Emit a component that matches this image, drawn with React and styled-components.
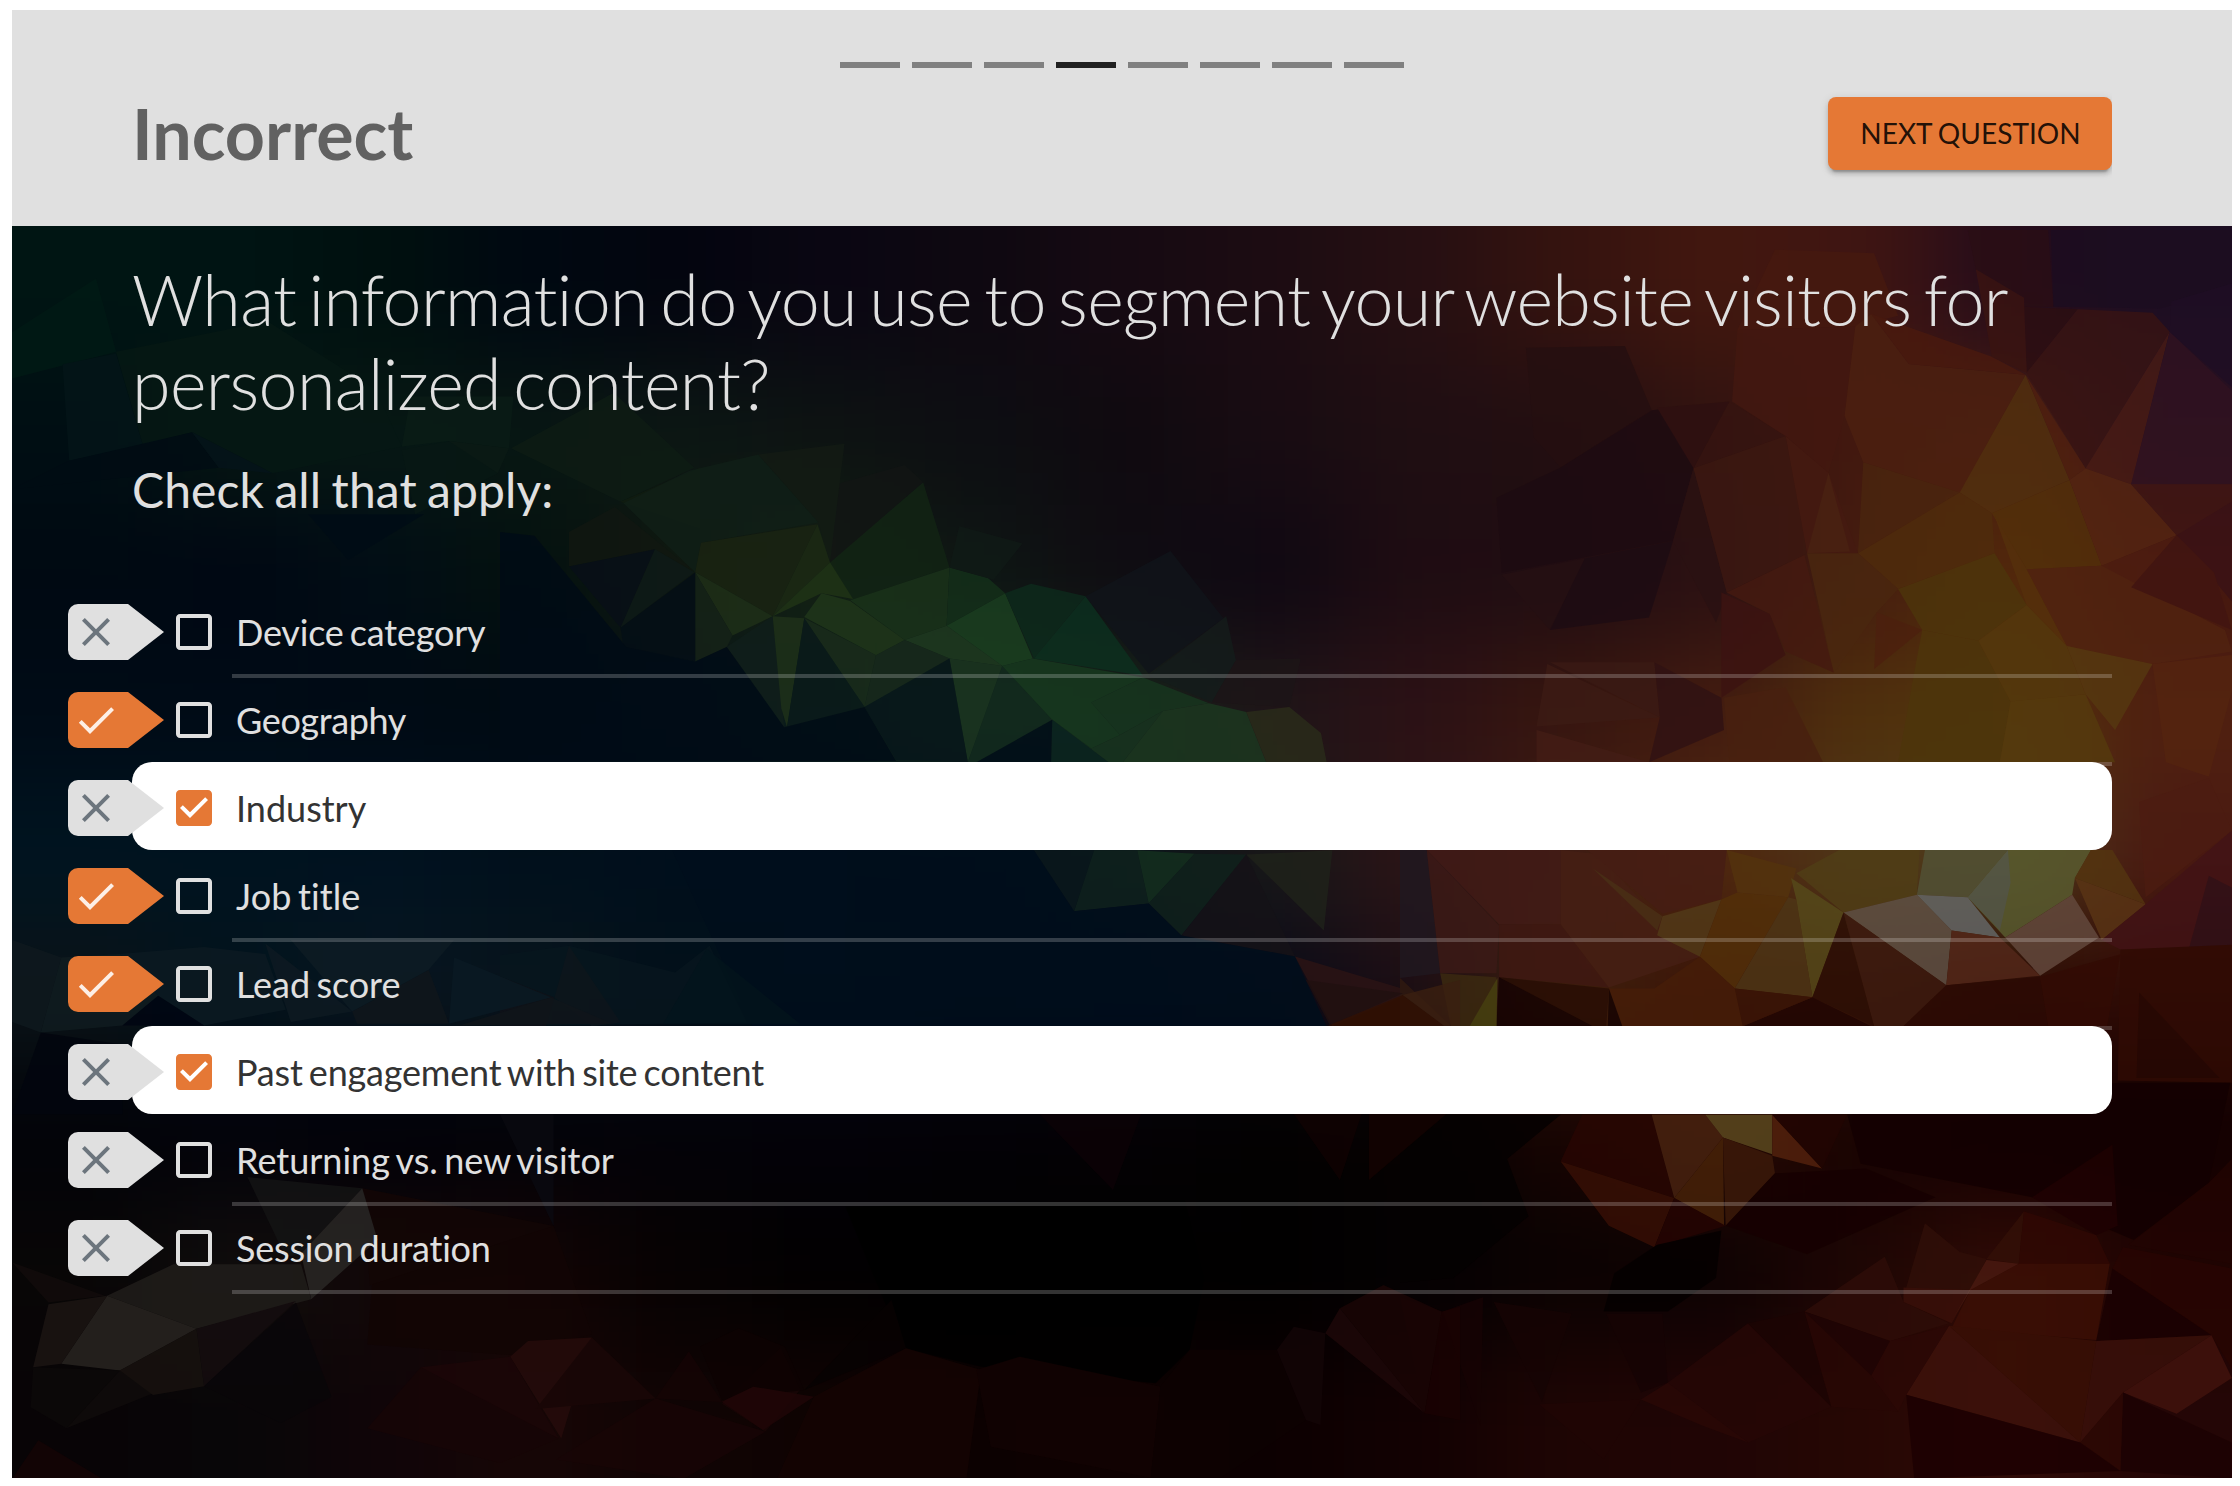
import React from "react";
import styled, { createGlobalStyle } from "styled-components";

const ORANGE = "#e57835";
const SILVER = "#e0e0e0";

const GlobalStyle = createGlobalStyle`
  html, body { margin: 0; padding: 0; background: #fff; overflow: hidden; }
  *, *::before, *::after { box-sizing: border-box; }
  body { font-family: Lato, "Liberation Sans", sans-serif; font-variant-ligatures: none; }
`;

const Page = styled.main`
  display: flex;
  flex-direction: column;
  height: 1486px;
  padding: 10px 8px 8px 12px;
`;

const Header = styled.header`
  flex: none;
  height: 216px;
  padding: 52px 120px 0;
  background: ${SILVER};
`;

const Progress = styled.ol`
  display: flex;
  justify-content: center;
  gap: 12px;
  margin: 0;
  padding: 0;
  list-style: none;
`;

const Step = styled.li`
  width: 60px;
  height: 6px;
  background: ${(p) => (p.$current ? "#212121" : "#808080")};
`;

const ResultBar = styled.div`
  display: flex;
  align-items: center;
  justify-content: space-between;
  height: 73px;
  margin-top: 29px;
`;

const ResultTitle = styled.h1`
  margin: 0 0 2px;
  color: #616161;
  font-size: 70px;
  font-weight: 700;
  line-height: 84px;
`;

const NextButton = styled.button`
  width: 284px;
  height: 73px;
  padding: 0 0 2px 1px;
  border: 0;
  border-radius: 8px;
  background: ${ORANGE};
  color: rgba(0, 0, 0, 0.87);
  font: 400 28px/34px Lato, "Liberation Sans", sans-serif;
  letter-spacing: 0.04px;
  word-spacing: -1.2px;
  text-transform: uppercase;
  white-space: nowrap;
  box-shadow: 0 6px 2px -4px rgba(0, 0, 0, 0.2), 0 4px 4px rgba(0, 0, 0, 0.14), 0 2px 10px rgba(0, 0, 0, 0.12);
  clip-path: inset(-20px 0 -20px -20px);
`;

const Stage = styled.section`
  display: grid;
  flex: 1;
  min-height: 0;
  background: #000;
`;

const Backdrop = styled.svg`
  grid-area: 1 / 1;
  display: block;
  width: 2220px;
  height: 1252px;
`;

const Content = styled.div`
  grid-area: 1 / 1;
  position: relative;
  padding: 31px 120px 0;
  color: ${SILVER};
`;

const Question = styled.h2`
  margin: 0;
  font-size: 70px;
  font-weight: 300;
  line-height: 84px;
  letter-spacing: -0.68px;
  word-spacing: -6px;
`;

const Hint = styled.p`
  height: 58px;
  margin: 36px 0 67px;
  font-size: 48px;
  line-height: 58px;
  letter-spacing: 0.1px;
  word-spacing: -2px;
`;

const Options = styled.ul`
  margin: 0;
  padding: 0;
  list-style: none;
`;

const Option = styled.li`
  position: relative;
  display: flex;
  align-items: center;
  gap: 18px;
  height: 88px;
  padding: 4px 0 0 38px;
  border-radius: ${(p) => (p.$selected ? "20px" : "0")};
  background: ${(p) => (p.$selected ? "#fff" : "transparent")};
  color: ${(p) => (p.$selected ? "#333" : SILVER)};

  &::after {
    content: "";
    display: ${(p) => (p.$selected ? "none" : "block")};
    position: absolute;
    top: 100%;
    left: 100px;
    right: 0;
    height: 4px;
    background: rgba(255, 255, 255, 0.2);
  }
`;

const OptionLabel = styled.span`
  font-size: 36px;
  line-height: 44px;
  letter-spacing: ${(p) => p.$tracking ?? -0.2}px;
  word-spacing: -2.8px;
`;

const Verdict = styled.span`
  position: absolute;
  top: 18px;
  left: -64px;
  display: flex;
  align-items: center;
  width: 60px;
  height: 56px;
  padding-left: 4px;
  border-radius: 10px 0 0 10px;
  background: ${(p) => (p.$right ? ORANGE : SILVER)};
  color: ${(p) => (p.$right ? "#fdefe6" : "#6c757d")};

  &::after {
    content: "";
    position: absolute;
    left: 100%;
    top: 0;
    border: 28px solid transparent;
    border-width: 28px 0 28px 36px;
    border-left-color: ${(p) => (p.$right ? ORANGE : SILVER)};
  }
`;

const Icon = styled.svg`
  flex: none;
  width: 48px;
  height: 48px;
  fill: ${(p) => p.$fill || "currentColor"};
`;

const PATHS = {
  check: "M9 16.17 4.83 12l-1.42 1.41L9 19 21 7l-1.41-1.41z",
  cross: "M19 6.41 17.59 5 12 10.59 6.41 5 5 6.41 10.59 12 5 17.59 6.41 19 12 13.41 17.59 19 19 17.59 13.41 12z",
  boxEmpty: "M19 5v14H5V5h14m0-2H5c-1.1 0-2 .9-2 2v14c0 1.1.9 2 2 2h14c1.1 0 2-.9 2-2V5c0-1.1-.9-2-2-2z",
  boxChecked:
    "M19 3H5c-1.11 0-2 .9-2 2v14c0 1.1.89 2 2 2h14c1.11 0 2-.9 2-2V5c0-1.1-.89-2-2-2zm-9 14l-5-5 1.41-1.41L10 14.17l7.59-7.59L19 8l-9 9z",
};

const Glyph = ({ name, fill }) => (
  <Icon viewBox="0 0 24 24" $fill={fill} aria-hidden="true">
    <path d={PATHS[name]} />
  </Icon>
);

// Colour field under the facets: one row of 15 swatches per 139px band.
const FIELD = [
  "001513 001413 00100f 000811 03050f 0a0612 0e0811 160a12 1c0c12 260f12 35130f 42170f 3f1512 250c1a 1c0d22",
  "000e13 051612 071814 081713 0c1714 0d1312 0d0e12 0f0a10 180c12 1f0e12 220e11 301310 43180f 4a1e10 2c1220",
  "000912 000713 010d15 04110f 10180f 132013 0e1613 0f0c12 0f0812 1e0c12 200d12 2a1012 451c0f 52290b 45170f",
  "000b16 000b16 000a14 000a12 07141a 0c1f1a 142a1c 15251a 201518 2c1115 38160f 431b10 4f300c 53360b 502010",
  "001420 001320 001220 00101c 000f1c 000d1c 000c18 0a141a 181818 2c1416 3e1b14 50280f 50381a 50401c 4a1a12",
  "0a1318 02131c 081620 08141c 02101a 000f1c 000c18 02091a 0b0a18 1c0e14 40200c 3a1408 3a1608 2c0a04 300b05",
  "020308 02020a 010108 020208 030208 030108 030106 040104 030101 060101 180402 2a0a03 180302 140002 120001",
  "080606 100d0c 120808 120404 060202 010001 000000 000000 000000 030102 0a0202 0c0203 1e0604 300b05 200402",
  "080406 080608 100508 170606 100404 0f0302 0c0101 0e0101 0c0001 120102 1e0504 200505 260704 300b07 240606",
].map((row) => row.split(" "));

// Facets are grouped in tiles; each tile has its own origin and unit scale.
const TILES = [
  {
    at: [0, 0], unit: [1 / 2.24, 1 / 2.8],
    facets: `001a15 27,930 215,780 260,985 27,1060
      041518 140,1020 260,990 320,1245 155,1290
      061814 260,985 600,900 840,1090 900,1250 610,1325 430,1210 320,1245
      010c14 155,1290 430,1210 490,1310 27,1370
      0e1c14 1145,1255 1375,1100 1555,1310 1390,1405
      081814 900,1260 1010,1235 1115,1325 930,1440
      0a1c16 920,1110 1150,1110 1140,1255 1005,1235 900,1250
      0b1a15 1005,1235 1140,1255 1115,1325
      000c16 690,1440 950,1440 780,1568
      111d10 1390,1405 1568,1310 1568,1480
      05131a 430,1210 610,1325 490,1310`,
  },
  {
    at: [500, 440], unit: [1 / 1.742, 1 / 2.61],
    facets: `101f17 450,38 555,215 350,268 340,345 215,165 330,80
      111711 120,240 200,175 340,345 270,285 120,330
      1a2412 350,268 553,220 475,460 340,345
      1c2a14 553,220 575,320 475,460
      122414 737,110 783,333 610,418 575,320
      121514 575,120 705,65 737,110 575,320
      131b14 450,38 600,10 575,320 555,215
      203416 475,460 575,320 615,415 560,400
      1f3018 340,345 475,460 405,510
      162318 340,345 405,510 395,540 340,578
      101e1b 475,460 395,540 495,750
      1f3119 475,460 530,465 500,750 490,700
      20371a 530,462 560,400 610,420 705,522 655,562
      1a2c1b 530,465 655,562 635,697
      0a1a1a 530,465 635,697 500,750
      1a331a 610,418 783,333 778,485 705,522
      14301a 783,333 850,360 880,400 778,485
      1b4020 778,485 880,400 928,570 875,590
      1f3a20 705,522 778,485 875,590 783,570
      18291c 655,562 705,522 783,570 635,697
      1b3520 783,570 875,590 815,841
      122a1e 875,590 962,730 830,841 815,841
      07161a 635,697 783,570 815,841 690,835
      17391f 875,590 928,570 1120,620 1030,685 1080,770 1030,805 962,730
      0d2a1c 880,400 925,375 1020,408 930,570
      0c301f 1020,408 1120,615 930,570
      10141a 1020,408 1168,290 1260,465 1130,610
      141c1b 1265,460 1282,575 1240,685 1130,615
      17361f 1120,620 1235,687 1155,707 1080,770 1030,685
      18341f 962,730 1030,805 1080,770 1155,707 1085,841 1060,841
      1c3820 1155,707 1235,687 1300,710 1335,841 1085,841
      2a2c1a 1300,710 1375,697 1430,765 1440,841 1335,841
      0a2420 962,730 1060,841 960,841
      080f18 120,330 270,285 210,490
      0e1a18 270,285 338,345 210,490
      040e16 340,345 340,578 215,540 210,490
      1c1517 1282,575 1395,570 1375,697 1240,685
      101a16 783,333 800,225 910,270 860,365
      000b16 0,240 60,250 220,540 340,578 395,540 495,750 635,697 690,838 0,838
      000d18 830,841 962,730 960,841
      0a181c 930,1071 1035,1071 1000,1230
      0f221d 1035,1071 1110,1071 1130,1210 1000,1230
      14301e 1110,1071 1210,1080 1130,1210
      10221c 1210,1080 1300,1082 1187,1293 1130,1210
      1f221a 1300,1082 1450,1071 1435,1280
      151217 1300,1082 1385,1348 1187,1293
      000e1c 300,1071 930,1071 1000,1230 1130,1210 1187,1293 1385,1348 1440,1530 440,1530
      07161e 0,1345 120,1320 305,1390 365,1320 430,1520 0,1530
      101218 0,1400 95,1455 80,1530 0,1530
      0e161c 120,1320 210,1520 160,1530 95,1455
      2c1414 1385,1348 1568,1430 1568,1460 1450,1530
      2c0f06 1450,1530 1568,1455 1568,1530`,
  },
  {
    at: [1400, 230], unit: [1 / 1.867, 1 / 2.8],
    facets: `250f10 235,330 420,325 470,505 300,665 250,580
      1d0b11 300,665 470,505 545,490 548,667 510,870 190,960 180,750
      361410 615,480 720,577 548,667
      2e1010 480,498 615,480 548,667
      251013 190,965 345,920 280,1120
      1d0c13 345,920 510,870 465,1085 280,1120
      2a1112 510,870 548,667 610,1015 590,1100
      3c1811 548,667 720,577 760,905 610,1015
      451a11 720,577 800,680 855,905 760,905
      4a2212 800,680 840,900 760,905
      431810 630,280 850,270 830,520 800,680 720,577 620,480
      46190f 700,55 885,65 930,240 850,270 630,280
      4c2010 850,270 880,235 950,375 1168,405 1045,735 865,650 830,520
      4a250e 865,650 1045,735 855,905
      4a1a0e 950,375 880,235 1105,355 1168,405
      2a0e15 1060,0 1210,0 1220,215 1165,215 1075,110
      2c0e12 1165,215 1265,222 1170,400
      3a1411 1075,110 1165,190 1170,400 1105,355
      1c0d20 1215,0 1553,0 1553,160 1420,220 1220,215
      381413 1265,222 1405,232 1437,285 1280,668 1170,400
      481b14 1437,285 1365,712 1280,668
      301220 1437,285 1553,450 1553,712 1365,712
      1f0e24 1440,200 1553,150 1553,440 1437,285
      52300e 1168,405 1250,700 1105,793 1045,735
      50200f 1168,405 1280,668 1250,700
      4f2c0c 1045,735 1105,793 1110,905 930,1005 855,905
      53300a 1105,793 1250,700 1310,940 1170,950
      4d350b 930,1005 1110,905 1170,1050 1080,1150 975,1120
      55300b 1110,800 1170,950 1245,1165 1170,1050
      552511 1250,700 1280,668 1365,712 1450,855 1310,940
      4e1d10 1310,940 1450,855 1365,1000
      512310 1170,950 1310,940 1540,1120 1553,1180 1405,1215 1245,1165
      401613 1365,712 1553,712 1553,780 1450,855
      3b1215 1450,855 1553,760 1553,1040
      421511 1365,1000 1450,855 1520,960 1553,1120
      4a270f 760,905 855,905 930,1005 890,1070 810,1240
      451a10 610,1015 755,910 810,1240 720,1180 690,1075
      3c1311 600,1015 690,1075 720,1190 600,1310
      4c200e 890,1070 975,1120 885,1230
      4d350b 975,1120 1080,1150 1140,1320 1120,1490 930,1490 960,1240
      54380d 1170,1050 1245,1165 1280,1300 1140,1320 1080,1150
      563810 1245,1165 1405,1215 1335,1400 1280,1300
      553a0d 1140,1320 1280,1300 1335,1490 1120,1490
      54240f 1405,1215 1553,1190 1553,1290 1510,1530 1430,1490
      3a1a14 280,1210 475,1210 485,1365
      3c1b14 275,1215 485,1365 255,1390
      431d15 255,1400 465,1490 255,1490
      301213 475,1210 600,1310 605,1400 465,1490 485,1365
      48200f 605,1310 720,1280 790,1490 615,1490`,
  },
  {
    at: [1400, 740], unit: [1 / 1.867, 1 / 2.1],
    facets: `201820 0,231 50,231 75,490 0,500
      3c1a16 50,231 185,390 180,490 75,490
      421b16 50,231 300,231 300,387 185,387
      3f1812 185,387 300,387 390,520 185,498
      461f14 300,231 370,240 490,385 560,455 390,520 300,387
      461d14 350,231 610,231 600,335 490,365
      523a18 490,370 600,335 560,455 480,410
      4a3016 360,270 490,370 480,400
      533009 600,335 630,320 725,330 625,522 560,455
      54330d 610,231 740,270 725,330 630,320
      503e16 740,280 820,231 970,231 965,325 828,362
      4e3616 725,330 740,335 770,540 625,522
      564a1a 730,290 828,362 770,540 740,335
      605246 828,362 965,325 1030,400 1020,515
      525236 965,325 980,231 1135,231 1060,330
      595c30 1135,231 1290,231 1260,290 1255,325 1130,415 1060,330
      565c4c 1135,231 1140,300 1120,400 1060,330
      656868 965,325 1060,330 1120,415 1030,400
      644a3e 1130,415 1255,325 1305,415 1195,495
      54281a 1020,515 1030,400 1120,415 1195,495
      5a3515 1260,290 1392,345 1310,420
      543510 1290,231 1330,231 1392,345 1260,290
      4c1c11 1380,130 1510,80 1553,190 1392,330
      421316 1392,345 1553,190 1553,430 1480,450 1345,440 1310,420
      301018 1510,285 1553,310 1553,430 1470,450
      3c1a0f 828,362 1020,515 940,601 885,601
      2c0e05 828,362 885,601 770,540
      200503 770,540 880,601 640,601
      3a1406 625,522 770,540 640,601
      461d08 390,522 475,522 560,455 625,522 640,601 415,601
      2c0a04 1020,515 1195,497 1210,601 940,601
      320b04 1195,497 1345,450 1320,601 1210,601
      300b04 1345,440 1553,430 1553,720 1340,715
      270803 1380,530 1530,710 1375,710
      280d04 185,498 390,522 385,601 180,601
      150202 185,498 360,601 180,601
      160302 390,522 415,601 388,601
      3c2a10 75,490 180,498 180,601 95,601
      4a4410 182,500 180,601 130,601
      301a10 0,500 95,601 0,601
      040101 0,787 300,787 200,880 240,1000 100,1130 0,1140
      280602 340,787 470,787 512,962 300,885
      380f05 300,885 512,962 475,1065 390,1020
      482310 470,787 570,787 603,835 512,962
      5c4a20 570,787 695,787 695,870 603,835
      54220d 695,787 788,900 695,873
      220502 695,787 835,787 788,900
      482309 603,835 605,1020 512,962
      3c1a0a 603,835 695,873 700,910 608,1020
      260402 512,962 608,1020 475,1065
      160001 608,1020 700,910 870,900 1000,960 760,1080
      130001 835,787 1340,720 1550,720 1510,930 1370,1050 1180,960 860,890
      1e0102 1180,960 1330,850 1340,1020 1300,1040
      220402 1510,930 1553,880 1553,1100 1360,1060
      040000 400,1120 480,1060 600,1030 590,1130 500,1200 380,1200
      300f08 980,1015 1045,1075 1095,1090 1065,1155 940,1170
      331007 1165,990 1155,1100 1095,1090
      300803 1165,990 1300,1040 1325,1100 1155,1100
      2e0d08 905,1085 940,1180 1025,1225 915,1262 755,1200
      3a1009 940,1150 1065,1155 1030,1225 940,1180
      3c0f05 1155,1100 1325,1100 1300,1260 1030,1235 1065,1155
      4a1a10 1095,1092 1155,1100 1065,1155 1030,1220
      280502 1350,1065 1553,1110 1553,1320 1515,1250 1330,1110
      1a0102 1330,1110 1515,1250 1300,1262
      3e120b 1025,1230 1270,1475 945,1375
      3a1005 1025,1230 1300,1262 1270,1475
      3a100a 1300,1262 1515,1250 1350,1370 1270,1475
      42130d 1350,1370 1515,1250 1553,1340 1450,1415
      1c0203 1350,1370 1553,1475 1553,1551 1345,1535
      2c0804 1350,1370 1345,1535 1270,1475
      1c0002 945,1375 1270,1475 1345,1535 960,1551
      200404 755,1200 915,1262 880,1335
      2c0806 915,1262 1025,1230 945,1375 930,1410 880,1335
      280705 755,1200 880,1335 930,1410 805,1400
      260706 650,1225 805,1400 650,1475 500,1350
      1c0403 650,1225 755,1200 805,1400
      2a0806 500,1350 650,1475 565,1440 450,1385
      200505 450,1385 380,1510 260,1395
      160304 80,1200 155,1170 150,1440
      120303 0,1170 80,1200 45,1410
      160404 175,1180 320,1205 265,1390
      160304 385,1205 490,1205 500,1350 450,1370`,
  },
  {
    at: [0, 940], unit: [1 / 1.96, 1 / 2.868],
    facets: `0f191e 24,0 120,50 80,265 24,235
      0c1a22 235,40 400,20 520,40 560,200 400,245 310,160
      101c20 120,50 235,40 310,160 240,245 80,265
      0e1a22 520,10 690,205 570,235
      10161b 690,205 840,85 880,240 700,240
      0e1c24 570,0 890,0 840,85 690,205
      0a1a24 890,50 1080,165 880,240
      10151a 1080,165 1200,240 900,245
      03141c 1385,25 1568,240 1300,240
      000512 310,160 400,245 240,245
      02050e 80,265 240,300 240,500 24,500
      0a0a10 980,500 1085,500 1085,820
      141414 485,680 710,712 590,900 560,910
      120504 740,780 1085,820 1160,1130 1000,1190 720,1160
      130605 710,712 1085,820 725,990
      2a2826 710,712 740,860 610,1030 590,900
      120c0b 24,925 205,1020 95,1040
      211e1b 210,1020 340,930 590,930 610,1030 385,1115
      292521 210,1020 385,1115 235,1235 120,1215
      1c1513 95,1045 210,1020 120,1215 65,1225
      150d0f 385,1115 580,1035 400,1280
      090609 580,1040 650,1310 550,1385 400,1280
      100c0b 235,1235 300,1300 130,1400
      18120f 235,1235 385,1115 400,1280 300,1305
      0c0909 65,1225 235,1235 130,1400 60,1340
      260c0b 1160,1140 1100,1430 1000,1195 1035,1150
      1c0608 825,1225 1000,1195 1095,1430 830,1250
      1a0707 1160,1140 1285,1315 1050,1345
      170506 825,1225 1095,1430 980,1500 720,1400
      150405 1285,1315 1350,1180 1415,1325
      190606 1415,1330 1530,1170 1568,1290 1500,1410
      180506 1090,1490 1285,1315 1500,1410 1340,1545
      150405 75,1435 200,1545 24,1545`,
  },
  {
    at: [700, 980], unit: [1 / 2.063, 1 / 3],
    facets: `0c0206 700,402 910,402 852,630
      100202 1225,402 1365,402 1320,600
      140301 1380,402 1540,402 1380,600
      000000 300,680 1000,660 1040,900 1010,1110 940,1210 580,1160 420,1105
      201010 1250,0 1450,40 1300,137
      301003 1450,45 1535,137 1295,137
      3a1f10 1450,45 1568,0 1568,137 1535,137
      0d0202 0,1100 80,1045 175,1100 215,1230 45,1260
      070202 215,1230 395,960 425,1105
      150403 235,1250 425,1105 580,1170 550,1493 160,1493
      200607 45,1265 110,1220 235,1250 130,1350
      120303 570,1170 660,1130 950,1220 930,1493 600,1400
      0d0202 950,1220 1010,1110 1190,1110 1250,1320 1075,1493 930,1493
      130507 1190,1110 1225,1040 1290,1060 1280,1335 1250,1320
      1a0505 1320,985 1410,915 1530,995 1495,1300
      1e0809 1320,985 1495,1300 1290,1060
      1a0202 1530,995 1568,980 1568,1320 1495,1300`,
  },
].map((tile) => ({
  ...tile,
  facets: tile.facets.split("\n").map((line) => {
    const [color, ...points] = line.trim().split(" ");
    return { color: `#${color}`, points: points.join(" ") };
  }),
}));

const LowPolyBackdrop = () => (
  <Backdrop viewBox="12 226 2220 1252" preserveAspectRatio="none" aria-hidden="true">
    <defs>
      <filter id="field" x="-10%" y="-10%" width="120%" height="120%" colorInterpolationFilters="sRGB">
        <feGaussianBlur stdDeviation="48" />
      </filter>
    </defs>
    <g filter="url(#field)">
      {FIELD.map((row, r) =>
        row.map((color, c) => {
          const left = c === 0 ? -188 : 12 + c * 148;
          const top = r === 0 ? 26 : 226 + r * 139.2;
          const right = c === row.length - 1 ? 2432 : 13 + (c + 1) * 148;
          const bottom = r === FIELD.length - 1 ? 1678 : 227 + (r + 1) * 139.2;
          return (
            <rect key={`${r}-${c}`} x={left} y={top} width={right - left} height={bottom - top} fill={`#${color}`} />
          );
        })
      )}
    </g>
    {TILES.map(({ at, unit, facets }, i) => (
      <g key={i} transform={`translate(${at}) scale(${unit})`} opacity="0.82">
        {facets.map((f, j) => (
          <polygon key={j} points={f.points} fill={f.color} />
        ))}
      </g>
    ))}
  </Backdrop>
);

const STEPS = 8;
const CURRENT_STEP = 3;

const OPTIONS = [
  { label: "Device category" },
  { label: "Geography", right: true, tracking: -0.35 },
  { label: "Industry", selected: true, tracking: 0 },
  { label: "Job title", right: true, tracking: 0.1 },
  { label: "Lead score", right: true, tracking: -0.05 },
  { label: "Past engagement with site content", selected: true },
  { label: "Returning vs. new visitor", tracking: 0 },
  { label: "Session duration" },
];

export default function App() {
  return (
    <>
      <GlobalStyle />
      <Page>
        <Header>
          <Progress>
            {Array.from({ length: STEPS }, (_, i) => (
              <Step key={i} $current={i === CURRENT_STEP} />
            ))}
          </Progress>
          <ResultBar>
            <ResultTitle>Incorrect</ResultTitle>
            <NextButton type="button">Next question</NextButton>
          </ResultBar>
        </Header>
        <Stage>
          <LowPolyBackdrop />
          <Content>
            <Question>What information do you use to segment your website visitors for personalized content?</Question>
            <Hint>Check all that apply:</Hint>
            <Options>
              {OPTIONS.map(({ label, right, selected, tracking }) => (
                <Option key={label} $selected={selected}>
                  <Verdict $right={right}>
                    <Glyph name={right ? "check" : "cross"} />
                  </Verdict>
                  <Glyph name={selected ? "boxChecked" : "boxEmpty"} fill={selected ? ORANGE : SILVER} />
                  <OptionLabel $tracking={tracking}>{label}</OptionLabel>
                </Option>
              ))}
            </Options>
          </Content>
        </Stage>
      </Page>
    </>
  );
}
